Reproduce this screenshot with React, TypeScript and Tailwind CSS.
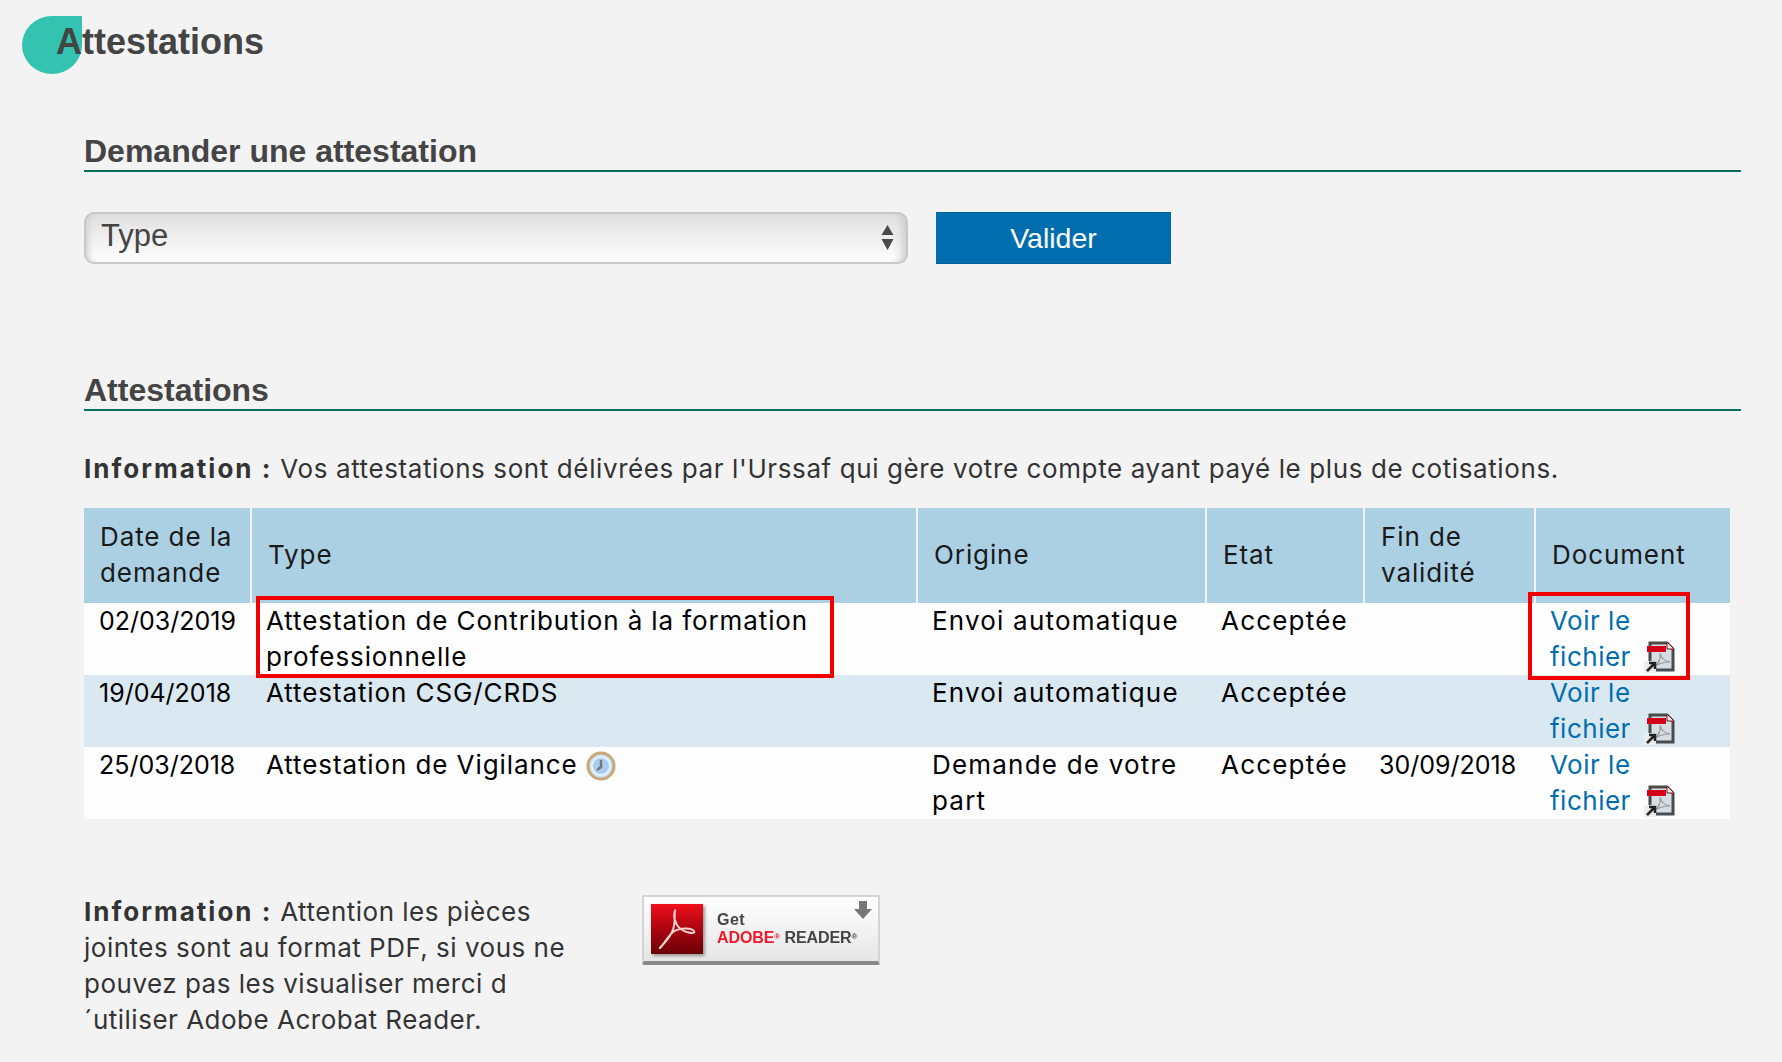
const bodyFont = 'font-["Inter",sans-serif]'

interface Row {
  date: string
  type: string
  clock?: boolean
  origin: string
  end?: string
  boxed?: boolean
}

const rows: Row[] = [
  { date: '02/03/2019', type: 'Attestation de Contribution à la formation professionnelle', origin: 'Envoi automatique', boxed: true },
  { date: '19/04/2018', type: 'Attestation CSG/CRDS', origin: 'Envoi automatique' },
  { date: '25/03/2018', type: 'Attestation de Vigilance', clock: true, origin: 'Demande de votre part', end: '30/09/2018' },
]

function PdfIcon() {
  return (
    <svg width="31" height="32" viewBox="0 0 31 32" className="inline-block shrink-0">
      <path d="M6 2h17l6 6v21H6z" fill="#d5dee5" stroke="#4a4a4a" strokeWidth="3" />
      <path d="M23 1l7 7h-7z" fill="#e8e8e8" stroke="#8a1020" strokeWidth="1" />
      <rect x="3" y="5" width="19" height="6" fill="#d4001a" />
      <path d="M10 26c5-4 7-9 6-14 1 5 4 8 10 9-6 0-11 1-16 5z" fill="none" stroke="#9a9a9a" strokeWidth="1.2" />
      <rect x="0" y="20" width="12" height="12" fill="#eee" />
      <path d="M3 30l7-7M5 22h6v6" fill="none" stroke="#222" strokeWidth="2.5" />
    </svg>
  )
}

function ClockIcon() {
  return (
    <svg width="30" height="30" viewBox="0 0 30 30" className="inline-block align-[-7px]">
      <circle cx="15" cy="15" r="13" fill="#c9e2f6" stroke="#c9a878" strokeWidth="3" />
      <circle cx="15" cy="15" r="9" fill="#a9cdf0" stroke="#e6f2fc" strokeWidth="2" />
      <path d="M15 9v7l-4 3" fill="none" stroke="#777" strokeWidth="2.5" />
    </svg>
  )
}

function AdobeBadge() {
  return (
    <div className="relative w-[238px] h-[70px] bg-gradient-to-b from-white to-[#e6e6e6] border-2 border-[#d4d4d4] border-b-[4px] border-b-[#888] rounded-[2px] mt-[-1px] flex items-center">
      <div className="w-[52px] h-[50px] ml-[7px] bg-gradient-to-b from-[#f0101a] to-[#6a0006] flex items-center justify-center shrink-0 shadow-[2px_2px_3px_#999]">
        <svg width="44" height="44" viewBox="0 0 44 44">
          <path d="M21 3c-3 0 1 12-4 22S3 42 5 41s8-12 13-16 18-5 21-1-12 2-17-6-2-15-1-15z" fill="none" stroke="#f5d0d0" strokeWidth="2" />
        </svg>
      </div>
      <div className="ml-[14px] font-['Liberation_Sans',sans-serif] font-bold text-[16px] leading-[18px] text-[#444] blur-[0.5px]">
        <div>Get</div>
        <div className="whitespace-nowrap tracking-[-0.1px]">
          <span className="text-[#f0182a]">ADOBE<sup className="text-[8px]">®</sup></span> <span>READER<sup className="text-[8px]">®</sup></span>
        </div>
      </div>
      <svg width="18" height="18" viewBox="0 0 18 18" className="absolute right-[6px] top-[4px]">
        <path d="M5 0h8v8h5l-9 10L0 8h5z" fill="#777" />
      </svg>
    </div>
  )
}

function SectionTitle({ children }: { children: string }) {
  return (
    <h2 className="font-['Liberation_Sans',sans-serif] font-bold text-[32px] leading-[38px] text-[#444] border-b-2 border-[#06705c] h-[40px]">
      {children}
    </h2>
  )
}

export default function App() {
  return (
    <div className={`min-h-[1062px] bg-[#f3f3f3] text-[26px] leading-[36px] ${bodyFont} overflow-hidden`}>
      <div className="relative h-[132px]">
        <div className="absolute left-[22px] top-[16px] w-[60px] h-[58px] bg-[#33c3b0] rounded-tl-[50%] rounded-bl-[50%] rounded-br-[50%]" />
        <h1 className="absolute left-[56px] top-[20px] font-['Liberation_Sans',sans-serif] font-bold text-[36px] leading-[44px] text-[#444]">
          Attestations
        </h1>
      </div>

      <div className="ml-[84px] w-[1657px]">
        <SectionTitle>Demander une attestation</SectionTitle>

        <div className="flex gap-[28px] mt-[40px]">
          <div className="relative w-[824px] h-[52px]">
            <select className="appearance-none w-full h-full pl-[15px] pb-[4px] rounded-[10px] border-2 border-[#c8c8c8] bg-gradient-to-b from-[#e0e0e0] to-white shadow-[inset_6px_0_6px_-4px_#ccc,inset_-10px_0_8px_-6px_#ccc] text-[#444] text-[31px] font-['Liberation_Sans',sans-serif] font-light">
              <option>Type</option>
            </select>
            <svg width="13" height="25" viewBox="0 0 13 25" className="absolute right-[14px] top-[13px]">
              <path d="M6.5 0l6 10H.5zM6.5 25L.5 14h12z" fill="#4a4a4a" />
            </svg>
          </div>
          <button className="w-[235px] h-[52px] bg-[#006eae] border-y border-[#005f96] text-white text-[28.5px] font-['Liberation_Sans',sans-serif]">
            Valider
          </button>
        </div>

        <div className="mt-[107px]">
          <SectionTitle>Attestations</SectionTitle>
        </div>

        <p className="mt-[40px] text-[#333] tracking-[0.6px] whitespace-nowrap">
          <b className="tracking-[2px]">Information :</b> Vos attestations sont délivrées par l'Urssaf qui gère votre compte ayant payé le plus de cotisations.
        </p>

        <table className="mt-[21px] w-[1646px] table-fixed border-collapse text-black tracking-[0.9px]">
          <colgroup>
            <col className="w-[167px]" />
            <col className="w-[666px]" />
            <col className="w-[289px]" />
            <col className="w-[158px]" />
            <col className="w-[171px]" />
            <col className="w-[195px]" />
          </colgroup>
          <thead>
            <tr className="bg-[#abcfe3] h-[95px] text-left text-[#1a1a1a]">
              {['Date de la demande', 'Type', 'Origine', 'Etat', 'Fin de validité', 'Document'].map(h => (
                <th key={h} className="px-[16px] pb-[1px] font-normal border-l-2 border-[#f3f3f3] first:border-l-0">{h}</th>
              ))}
            </tr>
          </thead>
          <tbody>
            {rows.map((r, i) => (
              <tr key={r.date} className={i % 2 === 1 ? 'bg-[#d9e8f1]' : 'bg-[#fdfdfe]'}>
                <td className="px-[15px] align-top text-[25px] tracking-normal">{r.date}</td>
                <td className="relative px-[15px] align-top">
                  {r.type}
                  {r.clock && <> <ClockIcon /></>}
                  {r.boxed && (
                    <div className="absolute left-[5px] top-[-7px] w-[578px] h-[82px] border-4 border-[#f00000]" />
                  )}
                </td>
                <td className="px-[15px] align-top tracking-[1.2px]">{r.origin}</td>
                <td className="px-[15px] align-top tracking-[1.2px]">Acceptée</td>
                <td className="px-[15px] align-top text-[25px] tracking-normal">{r.end}</td>
                <td className="relative px-[15px] align-top text-[#006eae] tracking-[0.5px]">
                  <div className="w-[100px]">Voir le</div>
                  <div className="flex items-center gap-[13px]">fichier <PdfIcon /></div>
                  {r.boxed && (
                    <div className="absolute left-[-7px] top-[-11px] w-[162px] h-[88px] border-4 border-[#f00000]" />
                  )}
                </td>
              </tr>
            ))}
          </tbody>
        </table>

        <div className="flex mt-[75px] text-[#333] tracking-[0.5px]">
          <div className="w-[490px] shrink-0">
            <b className="tracking-[2px]">Information :</b> Attention les pièces<br />
            jointes sont au format PDF, si vous ne<br />
            pouvez pas les visualiser merci d<br />
            ´utiliser Adobe Acrobat Reader.
          </div>
          <div className="ml-[68px] pt-[2px]">
            <AdobeBadge />
          </div>
        </div>
      </div>
    </div>
  )
}
